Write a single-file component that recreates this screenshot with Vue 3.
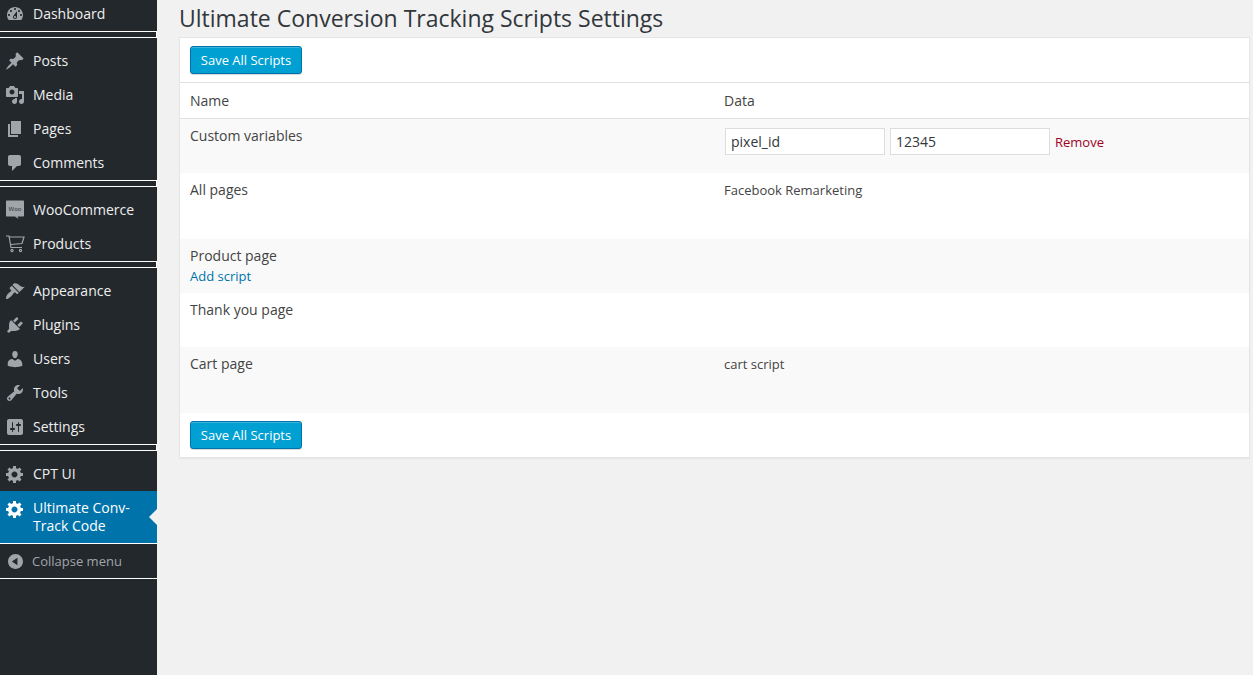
<template>
  <div class="page">
    <nav class="sidebar">
      <div v-for="(group, g) in menu" :key="g" class="group" :class="{ first: g === 0 }">
        <a
          v-for="item in group"
          :key="item.label"
          class="item"
          :class="{ active: item.active }"
        >
          <svg v-if="item.icon" class="icon" viewBox="0 0 20 20"><path :d="icons[item.icon]" /></svg>
          <svg v-else-if="item.woo" class="icon" viewBox="0 0 20 20">
            <path d="M2 .5h16c.6 0 1 .4 1 1v14c0 .6-.4 1-1 1h-5.5l1 2.5-3.5-2.5H2c-.6 0-1-.4-1-1v-14c0-.6.4-1 1-1z" />
            <text x="10" y="10.5" class="woo-text">Woo</text>
          </svg>
          <svg v-else class="icon cart" viewBox="0 0 20 20">
            <path d="M1 2h3l2 11.5h11M4.5 3H19l-2 6.5-11 1" />
            <circle cx="7" cy="16.5" r="1.1" />
            <circle cx="15.5" cy="16.5" r="1.1" />
          </svg>
          <span>{{ item.label }}</span>
          <i v-if="item.active" class="arrow"></i>
        </a>
      </div>
      <a class="collapse">
        <svg class="icon" viewBox="0 0 20 20"><path :d="icons.collapse" /></svg>
        <span>Collapse menu</span>
      </a>
    </nav>

    <main class="main">
      <h1 class="title">Ultimate Conversion Tracking Scripts Settings</h1>
      <div class="card">
        <div class="actions top"><button class="btn">Save All Scripts</button></div>
        <div class="row head">
          <div>Name</div>
          <div>Data</div>
        </div>
        <div class="row alt vars">
          <div>Custom variables</div>
          <div class="fields">
            <input class="field" value="pixel_id" />
            <input class="field" value="12345" />
            <a class="remove">Remove</a>
          </div>
        </div>
        <div class="row tall">
          <div>All pages</div>
          <div class="small">Facebook Remarketing</div>
        </div>
        <div class="row alt">
          <div>
            Product page
            <a class="add">Add script</a>
          </div>
          <div></div>
        </div>
        <div class="row">
          <div>Thank you page</div>
          <div></div>
        </div>
        <div class="row alt tall">
          <div>Cart page</div>
          <div class="small">cart script</div>
        </div>
        <div class="actions"><button class="btn">Save All Scripts</button></div>
      </div>
    </main>
  </div>
</template>

<script setup>
const icons = {
  dashboard: 'M3.76 16h12.48c1.1-1.37 1.76-3.11 1.76-5 0-4.42-3.58-8-8-8s-8 3.58-8 8c0 1.89.66 3.63 1.76 5zM10 4c.55 0 1 .45 1 1s-.45 1-1 1-1-.45-1-1 .45-1 1-1zM6 6c.55 0 1 .45 1 1s-.45 1-1 1-1-.45-1-1 .45-1 1-1zm8 0c.55 0 1 .45 1 1s-.45 1-1 1-1-.45-1-1 .45-1 1-1zm-5.37 5.55L12 7v6c0 1.1-.9 2-2 2s-2-.9-2-2c0-.57.24-1.08.63-1.45zM4 10c.55 0 1 .45 1 1s-.45 1-1 1-1-.45-1-1 .45-1 1-1zm12 0c.55 0 1 .45 1 1s-.45 1-1 1-1-.45-1-1 .45-1 1-1zm-5 3c0-.55-.45-1-1-1s-1 .45-1 1 .45 1 1 1 1-.45 1-1z',
  post: 'M10.44 3.02l1.82-1.82 6.36 6.35-1.83 1.82c-1.05-.68-2.48-.57-3.41.36l-.75.75c-.92.93-1.04 2.35-.35 3.41l-1.83 1.82-2.41-2.41-2.8 2.79c-.42.42-3.38 2.71-3.8 2.29s1.86-3.39 2.28-3.81l2.79-2.79L4.1 9.36l1.83-1.82c1.05.69 2.48.57 3.4-.36l.75-.75c.93-.92 1.05-2.35.36-3.41z',
  media: 'M13 11V4c0-.55-.45-1-1-1h-1.67L9 1H5L3.67 3H2c-.55 0-1 .45-1 1v7c0 .55.45 1 1 1h10c.55 0 1-.45 1-1zM7 4.5c1.38 0 2.5 1.12 2.5 2.5S8.38 9.5 7 9.5 4.5 8.38 4.5 7 5.62 4.5 7 4.5zM14 6h5v10.5c0 1.38-1.12 2.5-2.5 2.5S14 17.88 14 16.5s1.12-2.5 2.5-2.5c.17 0 .34.02.5.05V9h-3V6zm-4 8.05V13h2v3.5c0 1.38-1.12 2.5-2.5 2.5S7 17.88 7 16.5 8.12 14 9.5 14c.17 0 .34.02.5.05z',
  page: 'M6 15V2h10v13H6zm-1 1h8v2H3V5h2v11z',
  comments: 'M5 2h9c1.1 0 2 .9 2 2v7c0 1.1-.9 2-2 2h-2l-5 5v-5H5c-1.1 0-2-.9-2-2V4c0-1.1.9-2 2-2z',
  appearance: 'M14.48 11.06L7.41 3.99l1.5-1.5c.5-.56 2.3-.47 3.51.32 1.21.8 1.43 1.28 2.91 2.1 1.18.64 2.45 1.26 4.45.85zm-.71.71L6.7 4.7 4.93 6.47c-.39.39-.39 1.02 0 1.41l1.06 1.06c.39.39.39 1.03 0 1.42-.6.6-1.43 1.11-2.21 1.69-.35.26-.7.53-1.01.84C1.5 14.2.4 17 1.2 17.9c.9.9 4.9-2.4 6.15-3.97.58-.78 1.09-1.61 1.69-2.21.39-.39 1.03-.39 1.42 0l1.06 1.06c.39.39 1.02.39 1.41 0z',
  plugins: 'M13.11 4.36L9.87 7.6 8 5.73l3.24-3.24c.35-.34 1.05-.2 1.56.32.52.51.66 1.21.31 1.55zm-8 1.77l.91-1.12 9.01 9.01-1.19.84c-.71.71-2.63 1.16-3.82 1.16H6.14L4.9 17.26c-.59.59-1.54.59-2.12 0-.59-.58-.59-1.53 0-2.12l1.24-1.24v-3.88c0-1.13.4-3.19 1.09-3.89zm7.26 3.97l3.24-3.24c.34-.35 1.04-.21 1.55.31.52.51.66 1.21.31 1.55l-3.24 3.25z',
  users: 'M10 9.25c-2.27 0-2.73-3.44-2.73-3.44C7 4.02 7.82 2 9.97 2c2.16 0 2.98 2.02 2.71 3.81 0 0-.41 3.44-2.68 3.44zm0 2.57L12.72 10c2.39 0 4.52 2.33 4.52 4.53v2.49s-3.65 1.13-7.24 1.13c-3.65 0-7.24-1.13-7.24-1.13v-2.49c0-2.25 1.94-4.48 4.47-4.48z',
  tools: 'M16.68 9.77c-1.34 1.34-3.3 1.67-4.95.99l-5.41 6.52c-.99.99-2.59.99-3.58 0s-.99-2.59 0-3.57l6.52-5.42c-.68-1.65-.35-3.61.99-4.95 1.28-1.28 3.12-1.62 4.72-1.06l-2.89 2.89 2.82 2.82 2.86-2.87c.53 1.58.18 3.39-1.08 4.65zM3.81 16.21c.4.39 1.04.39 1.43 0 .4-.4.4-1.04 0-1.43-.39-.4-1.03-.4-1.43 0-.39.39-.39 1.03 0 1.43z',
  settings: 'M18 16V4c0-1.1-.9-2-2-2H4c-1.1 0-2 .9-2 2v12c0 1.1.9 2 2 2h12c1.1 0 2-.9 2-2zM8 11h1c.55 0 1 .45 1 1s-.45 1-1 1H8v1.5c0 .28-.22.5-.5.5s-.5-.22-.5-.5V13H6c-.55 0-1-.45-1-1s.45-1 1-1h1V5.5c0-.28.22-.5.5-.5s.5.22.5.5V11zm5-2h-1c-.55 0-1-.45-1-1s.45-1 1-1h1V5.5c0-.28.22-.5.5-.5s.5.22.5.5V7h1c.55 0 1 .45 1 1s-.45 1-1 1h-1v5.5c0 .28-.22.5-.5.5s-.5-.22-.5-.5V9z',
  generic: 'M18 12h-2.18c-.17.7-.44 1.35-.81 1.93l1.54 1.54-2.1 2.1-1.54-1.54c-.58.36-1.23.63-1.91.79V19H8v-2.18c-.68-.16-1.33-.43-1.91-.79l-1.54 1.54-2.12-2.12 1.54-1.54c-.36-.58-.63-1.23-.79-1.91H1V9.03h2.17c.16-.7.44-1.35.8-1.94L2.43 5.55l2.1-2.1 1.54 1.54c.58-.37 1.24-.64 1.93-.81V2h3v2.18c.68.16 1.33.43 1.91.79l1.54-1.54 2.12 2.12-1.54 1.54c.36.59.64 1.24.8 1.94H18V12zm-8.5 1.5c1.66 0 3-1.34 3-3s-1.34-3-3-3-3 1.34-3 3 1.34 3 3 3z',
  collapse: 'M10 2.16c4.33 0 7.84 3.51 7.84 7.84s-3.51 7.84-7.84 7.84S2.16 14.33 2.16 10 5.71 2.16 10 2.16zm2 11.72V6.12L6.18 9.97z'
}

const menu = [
  [{ label: 'Dashboard', icon: 'dashboard' }],
  [
    { label: 'Posts', icon: 'post' },
    { label: 'Media', icon: 'media' },
    { label: 'Pages', icon: 'page' },
    { label: 'Comments', icon: 'comments' }
  ],
  [
    { label: 'WooCommerce', woo: true },
    { label: 'Products' }
  ],
  [
    { label: 'Appearance', icon: 'appearance' },
    { label: 'Plugins', icon: 'plugins' },
    { label: 'Users', icon: 'users' },
    { label: 'Tools', icon: 'tools' },
    { label: 'Settings', icon: 'settings' }
  ],
  [
    { label: 'CPT UI', icon: 'generic' },
    { label: 'Ultimate Conv-Track Code', icon: 'generic', active: true }
  ]
]
</script>

<style>
body {
  background: #f1f1f1;
  overflow: hidden;
}
</style>

<style scoped>
.page {
  display: flex;
  height: 675px;
  overflow: hidden;
  font-family: "Open Sans", "Liberation Sans", sans-serif;
  font-size: 14px;
  color: #444;
}

.sidebar {
  width: 157px;
  flex-shrink: 0;
  background: #23282d;
}

/* the separators are two thin white lines with a dark gap */
.group {
  position: relative;
  padding-top: 12px;
  border-top: 1px solid #fff;
  box-shadow: inset 0 5px 0 #23282d, inset 0 6px 0 #fff;
}

.group::before {
  content: "";
  position: absolute;
  top: 0;
  right: 0;
  width: 1px;
  height: 6px;
  background: #fff;
}

.group.first {
  padding-top: 0;
  border-top: 0;
  box-shadow: none;
}

.group.first::before {
  display: none;
}

.item {
  position: relative;
  display: flex;
  align-items: center;
  gap: 8px;
  min-height: 34px;
  padding-left: 5px;
  color: #eee;
  line-height: 18px;
}

.first .item {
  min-height: 31px;
  padding-bottom: 3px;
  box-sizing: border-box;
}

.item.active {
  min-height: 52px;
  align-items: flex-start;
  padding-top: 8px;
  box-sizing: border-box;
  background: #0073aa;
  color: #fff;
}

.item.active span {
  width: 110px;
}

.item.active .icon {
  fill: #fff;
}

.arrow {
  position: absolute;
  right: 0;
  top: 18px;
  border: 8px solid transparent;
  border-right-color: #f1f1f1;
  border-left-width: 0;
}

.icon {
  width: 20px;
  height: 20px;
  flex-shrink: 0;
  fill: #a0a5aa;
}

.cart {
  fill: none;
  stroke: #a0a5aa;
  stroke-width: 1.2;
}

.woo-text {
  font-family: "Open Sans", sans-serif;
  font-size: 6px;
  fill: #23282d;
  text-anchor: middle;
}

.collapse {
  display: flex;
  align-items: center;
  gap: 7px;
  height: 34px;
  padding-left: 6px;
  border-top: 1px solid #fff;
  border-bottom: 1px solid #fff;
  color: #a0a5aa;
  font-size: 13px;
}

.collapse .icon {
  width: 19px;
  height: 19px;
}

.main {
  flex: 1;
  padding: 0 3px 0 22px;
}

.title {
  margin: 0;
  height: 37px;
  line-height: 37px;
  font-size: 23px;
  font-weight: 400;
  color: #32373c;
}

.card {
  background: #fff;
  border: 1px solid #e5e5e5;
  box-shadow: 0 1px 1px rgba(0, 0, 0, 0.04);
}

.actions {
  display: flex;
  align-items: center;
  height: 44px;
  padding-left: 10px;
}

.actions.top {
  border-bottom: 1px solid #e1e1e1;
}

.btn {
  height: 28px;
  width: 112px;
  padding: 0;
  background: #00a0d2;
  border: 1px solid #0073aa;
  border-radius: 3px;
  box-shadow: inset 0 1px 0 rgba(120, 200, 230, 0.5), 0 1px 0 rgba(0, 0, 0, 0.15);
  color: #fff;
  font-family: inherit;
  font-size: 13px;
}

.row {
  display: grid;
  grid-template-columns: 534px 1fr;
  height: 54px;
  box-sizing: border-box;
  padding: 7px 0 0 10px;
  line-height: 19px;
}

.row.head {
  height: 36px;
  border-bottom: 1px solid #e1e1e1;
  padding-top: 8px;
}

.row.alt {
  background: #f9f9f9;
}

.row.tall {
  height: 66px;
}

.small {
  padding-top: 1px;
  font-size: 13px;
}

.add {
  display: block;
  margin-top: 2px;
  font-size: 13px;
  color: #0073aa;
}

.fields {
  display: flex;
  align-items: center;
  height: 27px;
  gap: 5px;
  margin-top: 2px;
}

.field {
  width: 160px;
  height: 27px;
  box-sizing: border-box;
  margin-left: 1px;
  padding: 0 5px;
  border: 1px solid #ddd;
  background: #fff;
  color: #32373c;
  font-family: inherit;
  font-size: 14px;
}

.field + .field {
  margin-left: 0;
}

.remove {
  padding-top: 2px;
  font-size: 13px;
  color: #a00020;
}
</style>
